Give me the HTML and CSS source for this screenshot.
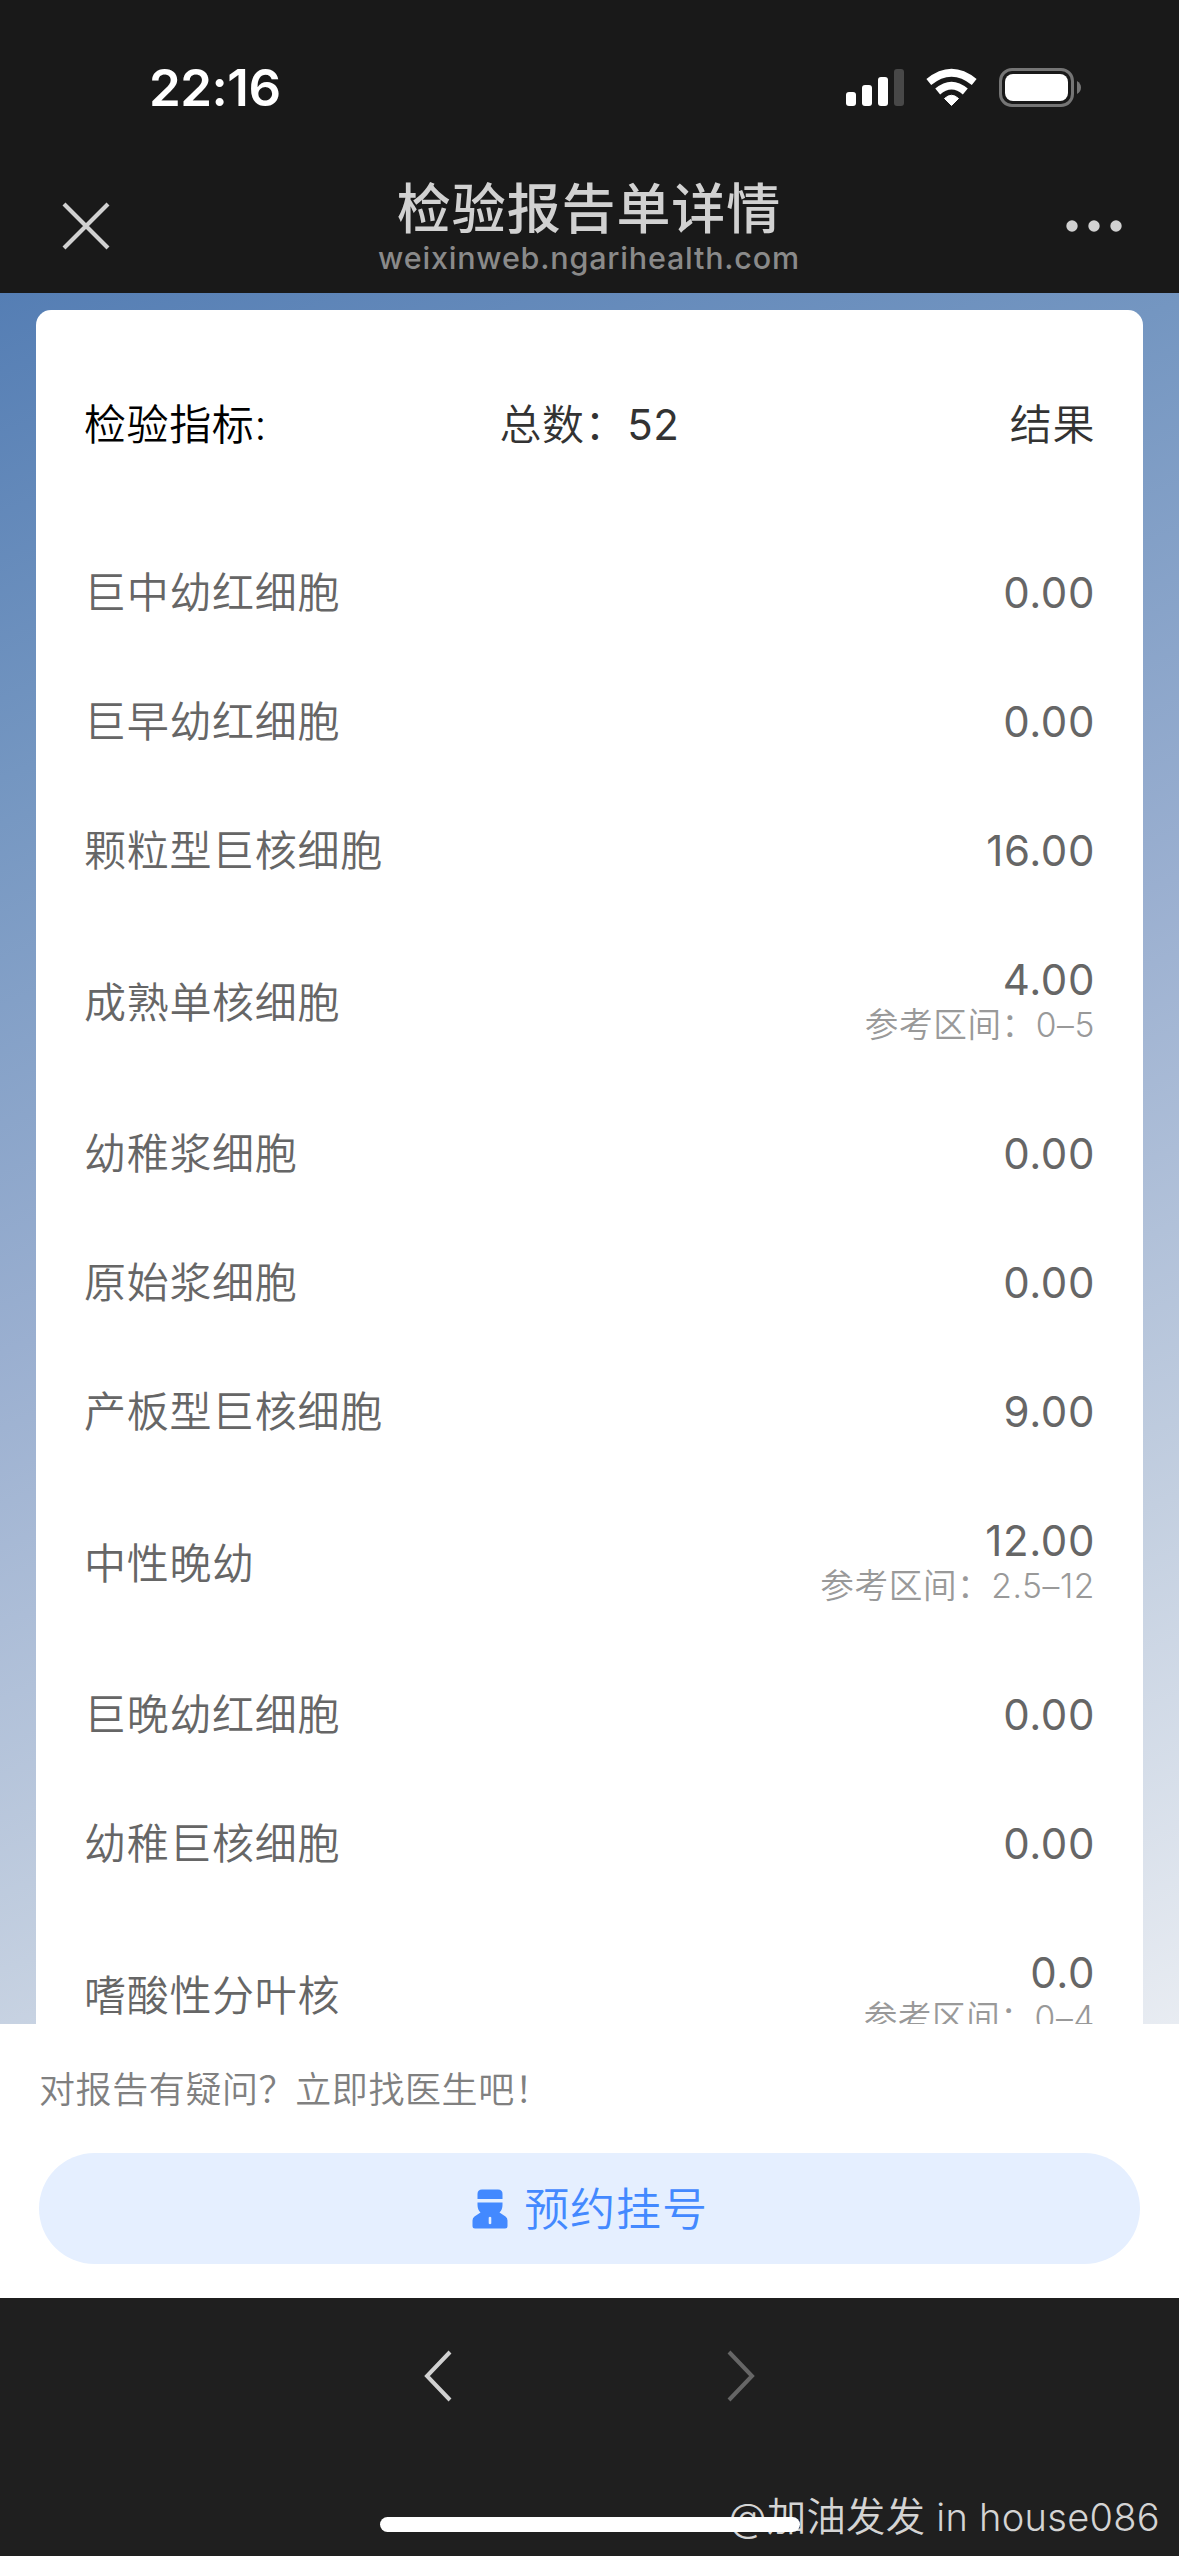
FILE: index.html
```html
<!DOCTYPE html>
<html lang="zh-CN">
<head>
<meta charset="utf-8">
<title>检验报告单详情</title>
<link rel="stylesheet" href="styles.css">
</head>
<body>
<div class="screen">
  <header class="top">
    <div class="status">
      <span class="time">22:16</span>
      <svg class="status-icons" width="236" height="40" viewBox="0 0 236 40">
        <g fill="#fff">
          <rect x="0" y="24" width="10" height="14" rx="3"/>
          <rect x="16" y="17" width="10" height="21" rx="3"/>
          <rect x="32" y="9" width="10" height="29" rx="3"/>
          <rect x="48" y="1" width="10" height="37" rx="3" fill="#484848"/>
          <path d="M105.500 37.500 L98.500 30.500 Q105.500 24 112.500 30.500Z" stroke="#fff" stroke-width="1" stroke-linejoin="round"/>
        </g>
        <g fill="none" stroke="#fff" stroke-width="7.600">
          <path d="M82.800 14 Q105.500 -4.500 128.200 14"/>
          <path d="M91.700 23.500 Q105.500 11.800 119.300 23.500"/>
        </g>
        <rect x="154.500" y="1.500" width="72" height="36" rx="11.500" fill="none" stroke="#757575" stroke-width="3"/>
        <rect x="159" y="6" width="63" height="27" rx="8" fill="#fff"/>
        <path d="M231 13 Q235 15.500 235 19.500 Q235 23.500 231 26Z" fill="#757575"/>
      </svg>
    </div>
    <div class="nav">
      <svg class="close" width="48" height="48" viewBox="0 0 48 48"><path d="M2 2 46 46M46 2 2 46" stroke="#d1d1d1" stroke-width="4.200"/></svg>
      <div class="heading">
        <h1 class="title">检验报告单详情</h1>
        <p class="host">weixinweb.ngarihealth.com</p>
      </div>
      <svg class="more" width="56" height="12" viewBox="0 0 56 12" fill="#d1d1d1"><circle cx="6" cy="6" r="5.700"/><circle cx="28" cy="6" r="5.700"/><circle cx="50" cy="6" r="5.700"/></svg>
    </div>
  </header>

  <main class="report">
    <section class="card">
      <div class="card-head"><span class="head-name">检验指标:</span><span class="head-count">总数：<span class="num">52</span></span><span class="head-result">结果</span></div>
      <ul class="rows">
        <li class="row"><span>巨中幼红细胞</span><div class="value">0.00</div></li>
        <li class="row"><span>巨早幼红细胞</span><div class="value">0.00</div></li>
        <li class="row"><span>颗粒型巨核细胞</span><div class="value">16.00</div></li>
        <li class="row"><span>成熟单核细胞</span><div class="value">4.00<small class="range">参考区间：0–5</small></div></li>
        <li class="row"><span>幼稚浆细胞</span><div class="value">0.00</div></li>
        <li class="row"><span>原始浆细胞</span><div class="value">0.00</div></li>
        <li class="row"><span>产板型巨核细胞</span><div class="value">9.00</div></li>
        <li class="row"><span>中性晚幼</span><div class="value">12.00<small class="range">参考区间：2.5–12</small></div></li>
        <li class="row"><span>巨晚幼红细胞</span><div class="value">0.00</div></li>
        <li class="row"><span>幼稚巨核细胞</span><div class="value">0.00</div></li>
        <li class="row"><span>嗜酸性分叶核</span><div class="value">0.0<small class="range">参考区间：0–4</small></div></li>
      </ul>
    </section>
  </main>

  <section class="ask">
    <p class="ask-text">对报告有疑问？立即找医生吧！</p>
    <button class="book">
      <svg width="36" height="40" viewBox="0 0 36 40" fill="#4389ff">
        <path d="M5.500 10V5Q5.500 .5 10 .5H26Q30.500 .5 30.500 5V10Z"/>
        <path fill-rule="evenodd" d="M5.500 13.500H30.500V16Q30.500 20.500 27.500 23.500L33.500 27.500Q35.500 29 35.500 31.500V37Q35.500 39.500 33 39.500H3Q.5 39.500 .5 37V31.500Q.5 29 2.500 27.500L8.500 23.500Q5.500 20.500 5.500 16ZM16.700 28.500V34.500Q18 36 19.300 34.500V28.500Q18 27 16.700 28.500Z"/>
      </svg>
      <span class="book-label">预约挂号</span>
    </button>
  </section>

  <footer class="toolbar">
    <div class="arrows">
      <svg width="28" height="52" viewBox="0 0 28 52" fill="none" stroke="#d1d1d1" stroke-width="4"><path d="M26 2 3 26 26 50"/></svg>
      <svg width="28" height="52" viewBox="0 0 28 52" fill="none" stroke="#666" stroke-width="4"><path d="M2 2 25 26 2 50"/></svg>
    </div>
    <div class="watermark"><span class="author">@加油发发</span> in house086</div>
    <div class="home-bar"></div>
  </footer>
</div>
</body>
</html>
```

FILE: styles.css
```css
* { box-sizing: border-box; margin: 0; padding: 0; }
body { font-family: Inter, "Noto Sans CJK SC", sans-serif; font-weight: 350; }
.screen { width: 1179px; height: 2556px; display: flex; flex-direction: column; overflow: hidden; background: #fff; }
.top { height: 293px; background: #191919; flex: none; }
.status { height: 176px; padding: 0 97px 0 149px; display: flex; justify-content: space-between; align-items: center; }
.time { color: #fff; font-size: 51px; font-weight: 600; letter-spacing: -.5px; padding-bottom: 1px; }
.nav { height: 100px; padding: 0 57px 0 62px; display: flex; justify-content: space-between; align-items: center; }
.nav svg { flex: none; }
.heading { text-align: center; padding: 2px 0 0 2px; }
.title { font-size: 54px; line-height: 64px; font-weight: 500; letter-spacing: .9px; color: #d1d1d1; }
.host { font-size: 30.500px; line-height: 32px; font-weight: 450; letter-spacing: .8px; color: #8a8a8a; padding-bottom: 2px; }
.report { height: 1731px; flex: none; padding: 17px 36px 0; overflow: hidden; background: linear-gradient(158deg, #557eb4 0%, #7496c1 22%, #9aafd0 48%, #c3cfe0 76%, #e8ecf2 100%); }
.card { background: #fff; border-radius: 15px 15px 0 0; padding: 0 48px; height: 1900px; font-size: 42px; letter-spacing: .6px; }
.card-head { height: 218px; padding-top: 85px; line-height: 60px; display: grid; grid-template-columns: 1fr auto 1fr; color: #333; }
.head-name { color: #000; }
.head-result { text-align: right; }
.rows { list-style: none; color: #666; }
.row { display: flex; justify-content: space-between; align-items: center; padding: 42px 0; line-height: 45px; letter-spacing: .7px; }
.value { text-align: right; letter-spacing: .6px; }
.value, .num { font-weight: 400; }
.range { display: block; font-size: 33.600px; line-height: 45px; font-weight: 350; letter-spacing: .6px; color: #999; }
.ask { height: 274px; flex: none; padding: 41px 39px 0; }
.ask-text { font-size: 36px; line-height: 50px; letter-spacing: .6px; color: #808080; }
.book { margin-top: 38px; width: 1101px; height: 111px; border: 0; border-radius: 56px; background: #e5efff; color: #4389ff; font: inherit; font-size: 45px; letter-spacing: .9px; display: flex; justify-content: center; align-items: center; gap: 16px; padding-left: 1px; }
.book-label { padding-bottom: 4px; }
.toolbar { position: relative; flex: 1; background: #1f1f1f; }
.arrows { display: flex; justify-content: center; gap: 275px; padding-top: 52px; }
.watermark { position: absolute; right: 19px; bottom: 11px; font-size: 38px; line-height: 56px; letter-spacing: .3px; color: #d4d4d4; white-space: nowrap; }
.author { font-size: 39.300px; }
.home-bar { position: absolute; left: 380px; top: 219px; width: 420px; height: 15px; border-radius: 8px; background: #fff; }
```
